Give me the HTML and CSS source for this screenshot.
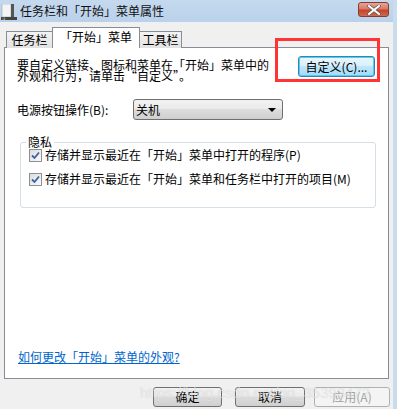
FILE: index.html
```html
<!DOCTYPE html>
<html lang="zh">
<head>
<meta charset="utf-8">
<title>任务栏和「开始」菜单属性</title>
<link rel="stylesheet" href="styles.css">
</head>
<body>
<div class="window">
  <div class="titlebar">
    <svg class="app-icon" width="16" height="16" viewBox="0 0 16 16">
      <rect x="1" y="0" width="9" height="13" fill="#f4f4f4" stroke="#9aa" stroke-width="0.6"/>
      <rect x="10" y="0" width="3" height="13" fill="#555"/>
      <rect x="0" y="13" width="16" height="3" fill="#444"/>
      <rect x="1" y="13.5" width="1.5" height="1" fill="#e33"/>
      <rect x="2.7" y="13.5" width="1.5" height="1" fill="#3b3"/>
      <rect x="1" y="14.7" width="1.5" height="1" fill="#36e"/>
      <rect x="2.7" y="14.7" width="1.5" height="1" fill="#fc2"/>
    </svg>
    <span class="title">任务栏和「开始」菜单属性</span>
    <div class="close">
      <svg width="14" height="10" viewBox="0 0 14 10">
        <path d="M2 1 L12 9 M12 1 L2 9" stroke="#555" stroke-width="3.4" stroke-linecap="square"/>
        <path d="M2 1 L12 9 M12 1 L2 9" stroke="#fff" stroke-width="2" stroke-linecap="square"/>
      </svg>
    </div>
  </div>
  <div class="body">
    <div class="tabs">
      <div class="tab t1">任务栏</div>
      <div class="tab active">「开始」菜单</div>
      <div class="tab t3">工具栏</div>
    </div>
    <div class="panel">
      <div class="row-top">
        <p class="desc">要自定义链接、图标和菜单在「开始」菜单中的<br>外观和行为，请单击“自定义”。</p>
        <div class="btn focus">自定义(C)...</div>
      </div>
      <div class="row-power">
        <span class="label">电源按钮操作(B):</span>
        <div class="select"><span>关机</span><span class="arrow"></span></div>
      </div>
      <div class="group">
        <div class="legend">隐私</div>
        <label class="check"><span class="box"><svg width="9" height="9" viewBox="0 0 9 9"><path d="M1 4.5 L3.5 7 L8 1.5" fill="none" stroke="#3c5fa8" stroke-width="1.8"/></svg></span>存储并显示最近在「开始」菜单中打开的程序(P)</label>
        <label class="check"><span class="box"><svg width="9" height="9" viewBox="0 0 9 9"><path d="M1 4.5 L3.5 7 L8 1.5" fill="none" stroke="#3c5fa8" stroke-width="1.8"/></svg></span>存储并显示最近在「开始」菜单和任务栏中打开的项目(M)</label>
      </div>
      <div class="spacer"></div>
      <a class="link" href="#">如何更改「开始」菜单的外观?</a>
    </div>
    <div class="buttons">
      <div class="btn ok">确定</div>
      <div class="btn cancel">取消</div>
      <div class="btn apply disabled">应用(A)</div>
    </div>
    <div class="watermark">https://blog.csdn.net/qq_35393472</div>
    <div class="highlight"></div>
  </div>
</div>
</body>
</html>
```

FILE: styles.css
```css
* { box-sizing: border-box; }
html, body { margin: 0; padding: 0; }
body {
  width: 397px;
  height: 409px;
  overflow: hidden;
  font-family: "Noto Sans CJK SC", "Liberation Sans", sans-serif;
  font-size: 12px;
  color: #000;
  background: #f0f0f0;
}
.window {
  width: 397px;
  height: 409px;
  display: flex;
  flex-direction: column;
  background: #f0f0f0;
  border-right: 4px solid #c9dbee;
}
.titlebar {
  height: 22px;
  flex: none;
  display: flex;
  align-items: center;
  background: linear-gradient(#c5d9ee, #b9d1ea);
  position: relative;
}
.app-icon { margin-left: 1px; margin-top: 2px; }
.title {
  margin-left: 3px;
  font-size: 12px;
  line-height: 14px;
  color: #111;
}
.close {
  position: absolute;
  right: 4px;
  top: 2px;
  width: 31px;
  height: 15px;
  border: 1px solid #8a3a30;
  border-radius: 3px;
  background: linear-gradient(#e8a494 0%, #d77b66 45%, #c4432b 55%, #cf6a4e 100%);
  display: flex;
  align-items: center;
  justify-content: center;
}
.body {
  flex: 1;
  position: relative;
  padding: 6px 3px 0 4px;
  display: flex;
  flex-direction: column;
}
.tabs {
  display: flex;
  align-items: flex-end;
  height: 20px;
  padding-left: 2px;
  position: relative;
  z-index: 1;
  margin-bottom: -1px;
}
.tab {
  height: 17px;
  border: 1px solid #898c95;
  border-bottom: none;
  background: linear-gradient(#f3f3f3, #e2e2e2);
  line-height: 16px;
  text-align: center;
  flex: none;
}
.tab.t1 { width: 47px; }
.tab.t3 { width: 43px; }
.tab.active {
  width: 88px;
  height: 21px;
  background: #fff;
  line-height: 17px;
  margin: 0 -1px;
  position: relative;
  z-index: 2;
}
.panel {
  height: 332px;
  width: 385px;
  background: #fff;
  border: 1px solid #898c95;
  padding: 8px 12px 0 12px;
  display: flex;
  flex-direction: column;
}
.row-top {
  display: flex;
  align-items: flex-start;
  justify-content: space-between;
  padding-right: 1px;
}
.desc {
  margin: 3px 0 0 0;
  line-height: 11px;
}
.btn {
  height: 21px;
  border: 1px solid #707070;
  border-radius: 3px;
  background: linear-gradient(#f2f2f2 0%, #ebebeb 45%, #dddddd 50%, #cfcfcf 100%);
  display: flex;
  align-items: center;
  justify-content: center;
  line-height: 14px;
}
.btn.focus {
  width: 77px;
  border-color: #3c7fb1;
  box-shadow: inset 0 0 0 1px #48d0f8;
  background: linear-gradient(#eaf6fd 0%, #d9f0fc 45%, #bee6fd 50%, #a7d9f5 100%);
}
.row-power {
  display: flex;
  align-items: center;
  margin-top: 18px;
}
.label { width: 116px; }
.select {
  width: 150px;
  height: 21px;
  border: 1px solid #707070;
  border-radius: 3px;
  background: linear-gradient(#f2f2f2 0%, #ebebeb 45%, #dddddd 50%, #cfcfcf 100%);
  display: flex;
  align-items: center;
  justify-content: space-between;
  padding: 0 6px 0 2px;
}
.arrow {
  width: 0;
  height: 0;
  border-left: 4px solid transparent;
  border-right: 4px solid transparent;
  border-top: 4px solid #000;
}
.group {
  margin: 22px 0 0 3px;
  width: 356px;
  height: 66px;
  border: 1px solid #d5dfe5;
  border-radius: 3px;
  position: relative;
  padding: 5px 0 0 8px;
  display: flex;
  flex-direction: column;
  gap: 10px;
}
.legend {
  position: absolute;
  top: -8px;
  left: 5px;
  padding: 0 2px;
  background: #fff;
  line-height: 14px;
}
.check {
  display: flex;
  align-items: center;
  height: 14px;
  line-height: 14px;
}
.box {
  width: 13px;
  height: 13px;
  border: 1px solid #8f8f8f;
  background: linear-gradient(135deg, #dcdcdc, #fbfbfb);
  display: flex;
  align-items: center;
  justify-content: center;
  margin-right: 3px;
}
.spacer { flex: 1; }
.link {
  color: #0066cc;
  text-decoration: underline;
  margin: 0 0 14px 1px;
  line-height: 14px;
  align-self: flex-start;
}
.buttons {
  display: flex;
  justify-content: flex-end;
  padding: 8px 0 0 0;
}
.btn.ok { width: 69px; height: 20px; }
.btn.cancel { width: 70px; height: 20px; margin-left: 13px; }
.btn.apply { width: 76px; height: 20px; margin-left: 9px; }
.btn.disabled {
  color: #a0a0a0;
  border-color: #adb2b5;
  background: #f4f4f4;
}
.watermark {
  position: absolute;
  left: 140px;
  top: 362px;
  font-family: "Liberation Sans", sans-serif;
  font-size: 15px;
  color: rgba(255, 255, 255, 0.5);
  text-shadow: 0 0 1px rgba(120, 120, 120, 0.3);
  pointer-events: none;
  white-space: nowrap;
}
.highlight {
  position: absolute;
  left: 275px;
  top: 16px;
  width: 105px;
  height: 44px;
  border: 3px solid #ff3434;
  pointer-events: none;
}
```
